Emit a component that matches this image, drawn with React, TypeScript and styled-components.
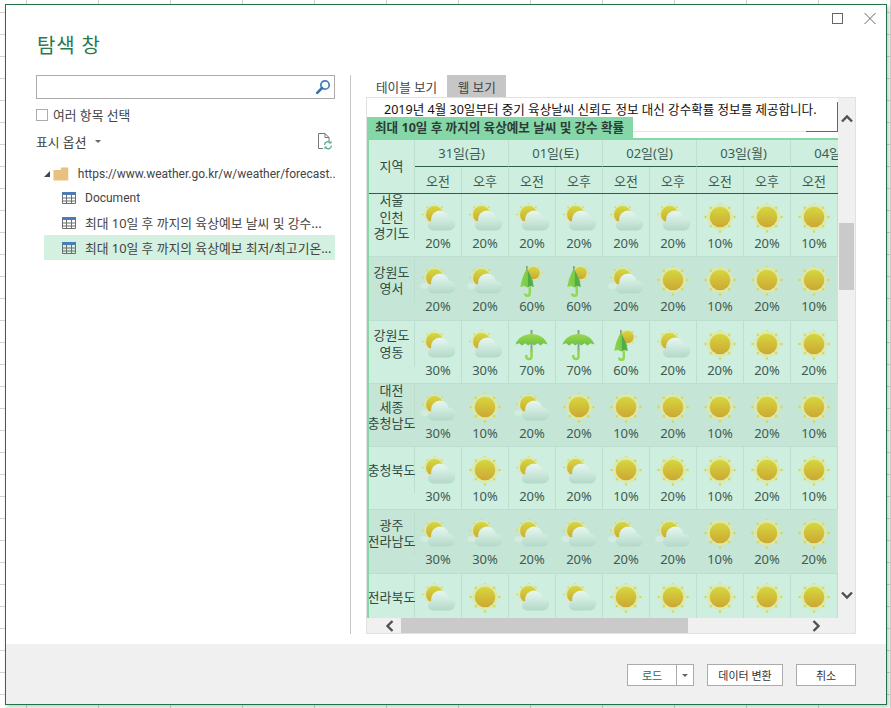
import React from 'react';
import styled, { createGlobalStyle } from 'styled-components';

const FONT = `"Noto Sans", "Noto Sans CJK KR", sans-serif`;
const LATIN = `Roboto, "Noto Sans CJK KR", sans-serif`;

const Global = createGlobalStyle`
  html, body { margin: 0; padding: 0; }
  body { font-family: ${FONT}; background: #fff; }
  * { box-sizing: border-box; }
`;

// 뒤쪽 엑셀 시트 격자
const Sheet = styled.div`
  width: 891px;
  height: 708px;
  padding: 4px 4px 3px 5px;
  overflow: hidden;
  background-color: #fff;
  background-image:
    linear-gradient(#d4d4d4 1px, transparent 1px),
    linear-gradient(90deg, #d4d4d4 1px, transparent 1px);
  background-size: 72px 22px;
  background-position: 26px 12px;
`;

const Dialog = styled.div`
  height: 701px;
  display: flex;
  flex-direction: column;
  background: #fff;
  border: 1px solid #217346;
  box-shadow: 2px 2px 4px rgba(0, 0, 0, 0.22);
`;

const TopBar = styled.div`
  height: 70px;
  display: flex;
  justify-content: space-between;
  padding: 8px 10px 0 31px;
`;

const Title = styled.h1`
  margin: 19px 0 0;
  font-size: 20px;
  line-height: 28px;
  font-weight: 400;
  letter-spacing: 0.8px;
  color: #2a7a50;
`;

const WinButtons = styled.div`
  display: flex;
  gap: 21px;
  align-items: flex-start;
`;

const Main = styled.div`
  flex: 1;
  display: flex;
  padding-left: 30px;
  min-height: 0;
`;

const LeftPane = styled.div`
  width: 299px;
  flex: none;
  display: flex;
  flex-direction: column;
`;

const Divider = styled.div`
  width: 1px;
  height: 559px;
  margin: 0 15px 0 15px;
  background: #c6c6c6;
`;

const RightPane = styled.div`
  width: 490px;
  flex: none;
`;

const SearchBox = styled.div`
  height: 24px;
  border: 1px solid #ababab;
  display: flex;
  align-items: center;
  justify-content: flex-end;
  padding-right: 3px;
`;

const CheckRow = styled.label`
  display: flex;
  align-items: center;
  gap: 5px;
  margin-top: 9px;
  font-size: 12.8px;
  line-height: 14px;
  color: #444;
`;

const CheckMark = styled.span`
  width: 12px;
  height: 12px;
  border: 1px solid #ababab;
  background: #fff;
`;

const OptionRow = styled.div`
  display: flex;
  align-items: center;
  justify-content: space-between;
  height: 18px;
  margin-top: 10px;
  padding-right: 2px;
  font-size: 12.8px;
  color: #444;
`;

const OptionLabel = styled.span`
  display: flex;
  align-items: center;
  gap: 9px;
`;

const Tree = styled.div`
  margin-top: 10px;
  color: #444;
`;

const TreeRow = styled.div<{ $selected?: boolean; $root?: boolean }>`
  height: 25px;
  margin-left: 8px;
  display: flex;
  align-items: center;
  padding-left: ${(p) => (p.$root ? '0' : '18px')};
  padding-top: ${(p) => (p.$root ? '2px' : '0')};
  background: ${(p) => (p.$selected ? '#d3f0e0' : 'transparent')};
  white-space: nowrap;
`;

const TreeText = styled.span<{ $latin?: boolean }>`
  margin-left: 9px;
  font-family: ${(p) => (p.$latin ? LATIN : FONT)};
  font-size: ${(p) => (p.$latin ? '12px' : '12.8px')};
  overflow: hidden;
`;

const Tabs = styled.div`
  height: 22px;
  display: flex;
  gap: 10px;
  padding-left: 10px;
  font-size: 12.6px;
`;

const Tab = styled.div<{ $active?: boolean }>`
  display: flex;
  align-items: center;
  color: #444;
  padding: 0 ${(p) => (p.$active ? '0' : '10.5px')};
  background: ${(p) => (p.$active ? 'transparent' : '#c6c6c6')};
`;

const WebPanel = styled.div`
  height: 537px;
  border: 1px solid #e1e1e1;
  display: grid;
  grid-template-columns: 471px 17px;
  grid-template-rows: 520px 15px;
  background: #f0f0f0;
`;

const Page = styled.div`
  background: #fff;
  overflow: hidden;
  display: flex;
  flex-direction: column;
`;

const Notice = styled.div`
  position: relative;
  height: 34px;
  padding: 3px 0 0 17px;
  font-size: 12.55px;
  line-height: 18px;
  color: #111;
  white-space: nowrap;
  border-bottom: 1px solid #dfe4f1;
  &::after {
    content: '';
    position: absolute;
    right: 0;
    top: 4px;
    bottom: -1px;
    width: 31px;
    border-right: 1px solid #1a73e8;
    border-bottom: 1px solid #1a73e8;
  }
`;

const Caption = styled.div`
  position: relative;
  width: 266px;
  height: 23px;
  margin-top: -15px;
  padding-left: 8px;
  background: #86d7a8;
  font-size: 12.6px;
  line-height: 21px;
  font-weight: 700;
  color: #2c3d35;
  white-space: nowrap;
`;

const TableWrap = styled.div`
  flex: 1;
  min-height: 0;
  overflow: hidden;
  border-left: 2px solid #86d7a8;
  border-top: 2px solid #86d7a8;
  margin-top: -2px;
  position: relative;
  background: #ceefdf;
`;

const HeadGrid = styled.div`
  position: relative;
  z-index: 1;
  display: grid;
  grid-template-columns: 46px repeat(10, 47px);
  grid-template-rows: 27px 26px;
  width: 516px;
  height: 54px;
  background: #ceefdf;
  color: #3f5a52;
  font-size: 13px;
  border-bottom: 1px solid #2f5d48;
`;

const RegionHead = styled.div`
  grid-row: span 2;
  display: flex;
  align-items: center;
  justify-content: center;
  border-right: 1px solid #bcdfcf;
  color: #2f4a40;
  padding-bottom: 3px;
`;

const DateHead = styled.div`
  grid-column: span 2;
  display: flex;
  align-items: center;
  justify-content: center;
  white-space: nowrap;
  padding-bottom: 1px;
  border-right: 1px solid #bcdfcf;
  border-bottom: 1px solid #2f5d48;
`;

const TimeHead = styled.div`
  display: flex;
  align-items: center;
  justify-content: center;
  border-right: 1px solid #bcdfcf;
`;

const BodyRow = styled.div<{ $dark: boolean }>`
  display: grid;
  grid-template-columns: 46px repeat(9, 47px);
  height: 63.3px;
  background: ${(p) => (p.$dark ? '#c5e6d6' : '#ceefdf')};
  border-bottom: 1px solid #bcdfcf;
`;

const RegionCell = styled.div`
  height: 46px;
  display: flex;
  flex-direction: column;
  align-items: center;
  justify-content: center;
  border-right: 1px solid #bcdfcf;
  font-size: 13px;
  line-height: 16.5px;
  color: #2f4a40;
  white-space: nowrap;
`;

const DataCell = styled.div<{ $dark: boolean }>`
  display: flex;
  flex-direction: column;
  align-items: center;
  padding-top: 9px;
  border-right: 1px solid ${(p) => (p.$dark ? 'transparent' : '#bcdfcf')};
  overflow: hidden;
`;

const Percent = styled.span`
  font-size: 13px;
  line-height: 16px;
  color: #3f5a52;
`;

const VScroll = styled.div`
  position: relative;
  display: flex;
  flex-direction: column;
  align-items: center;
  justify-content: space-between;
  padding: 15px 0 17px;
  background: #f0f0f0;
`;

const VThumb = styled.div`
  position: absolute;
  top: 125px;
  left: 1px;
  width: 15px;
  height: 67px;
  background: #cacaca;
`;

const HScroll = styled.div`
  position: relative;
  display: flex;
  align-items: center;
  justify-content: space-between;
  padding: 0 16px 0 17px;
  background: #f0f0f0;
`;

const HThumb = styled.div`
  position: absolute;
  left: 34px;
  top: 0;
  width: 287px;
  height: 15px;
  background: #cacaca;
`;

const Footer = styled.div`
  height: 60px;
  margin-top: 11px;
  flex: none;
  background: #f0f0f0;
  display: flex;
  justify-content: flex-end;
  gap: 13px;
  padding: 20px 30px 0 0;
`;

const Btn = styled.button<{ $w: number }>`
  width: ${(p) => p.$w}px;
  height: 22px;
  padding: 0;
  background: #fff;
  border: 1px solid #ababab;
  font-family: ${FONT};
  font-size: 11px;
  color: #333;
`;

const SplitBtn = styled.div`
  display: flex;
  width: 67px;
  height: 22px;
  background: #fff;
  border: 1px solid #ababab;
  font-size: 11px;
  color: #217346;
`;

const SplitMain = styled.div`
  flex: 1;
  display: flex;
  align-items: center;
  justify-content: center;
`;

const SplitArrow = styled.div`
  width: 17px;
  display: flex;
  align-items: center;
  justify-content: center;
  border-left: 1px solid #ababab;
`;

const Caret = styled.span`
  width: 0;
  height: 0;
  border-left: 3px solid transparent;
  border-right: 3px solid transparent;
  border-top: 3px solid #666;
`;

const TreeCaret = styled.span`
  width: 0;
  height: 0;
  margin-right: 3px;
  border-style: solid;
  border-width: 0 0 6px 6px;
  border-color: transparent transparent #444 transparent;
`;

const Search = () => (
  <svg width="16" height="16" viewBox="0 0 16 16">
    <circle cx="10" cy="6" r="4.2" fill="#fff" stroke="#3f7fbd" strokeWidth="1.7" />
    <path d="M7 9 L2.2 13.8" stroke="#3672ad" strokeWidth="2.6" strokeLinecap="round" />
  </svg>
);

const RefreshDoc = () => (
  <svg width="16" height="17" viewBox="0 0 16 17">
    <path d="M1.5 15.5V.5H8L12 4.5V8M8 .5V4.5H12M1.5 15.5H6" fill="none" stroke="#777" />
    <path d="M7.5 12a3.4 3.4 0 0 1 6-2M14.5 12.5a3.4 3.4 0 0 1-6 2" fill="none" stroke="#5fae8b" strokeWidth="1.3" />
    <path d="M14.5 7.5v3h-3zM7.5 16.5v-3h3z" fill="#5fae8b" />
  </svg>
);

const Folder = () => (
  <svg width="16" height="14" viewBox="0 0 16 14">
    <path d="M0.5 3H8V0.5H15.5V13.5H0.5Z" fill="#e8c17f" />
  </svg>
);

const TableIcon = () => (
  <svg width="14" height="12" viewBox="0 0 14 12">
    <rect x="0" y="0" width="14" height="3" fill="#4a7db8" />
    <path d="M.5 3v8.5h13V3M.5 6h13M.5 9h13M4.5 3v8.5M9.5 3v8.5" fill="none" stroke="#6f6f6f" />
  </svg>
);

const Rays = ({ cx, cy, r, d }: { cx: number; cy: number; r: number; d: number }) => (
  <g fill="#d9d84a">
    {[0, 45, 90, 135, 180, 225, 270, 315].map((a) => {
      const rad = (a * Math.PI) / 180;
      const dist = a % 90 === 0 ? r : r * 0.9;
      return (
        <rect
          key={a}
          x={cx + Math.cos(rad) * dist - d / 2}
          y={cy + Math.sin(rad) * dist - d / 2}
          width={d}
          height={d}
        />
      );
    })}
  </g>
);

const Defs = () => (
  <svg width="0" height="0" style={{ position: 'absolute' }}>
    <defs>
      <linearGradient id="sunFill" x1="0" y1="0" x2="0" y2="1">
        <stop offset="0" stopColor="#d6d73e" />
        <stop offset="1" stopColor="#cda733" />
      </linearGradient>
      <linearGradient id="cloudFill" gradientUnits="userSpaceOnUse" x1="0" y1="9" x2="0" y2="29">
        <stop offset="0" stopColor="#e6f7f0" />
        <stop offset="1" stopColor="#b2d8c7" />
      </linearGradient>
      <linearGradient id="umbFill" x1="0" y1="0" x2="0" y2="1">
        <stop offset="0" stopColor="#9ad94f" />
        <stop offset="1" stopColor="#6cc043" />
      </linearGradient>
      <linearGradient id="umbSide" x1="0" y1="0" x2="1" y2="0">
        <stop offset="0" stopColor="#8fd54c" />
        <stop offset="0.55" stopColor="#79c948" />
        <stop offset="0.6" stopColor="#4fab45" />
        <stop offset="1" stopColor="#58b247" />
      </linearGradient>
    </defs>
  </svg>
);

type Kind = 'sun' | 'cloud' | 'rain' | 'umbrella';

const Weather = ({ kind }: { kind: Kind }) => {
  if (kind === 'sun') {
    return (
      <svg width="40" height="32" viewBox="0 1 40 32">
        <circle cx="20" cy="15" r="13" fill="#dfe8a0" opacity="0.8" />
        <circle cx="20" cy="15" r="10.3" fill="url(#sunFill)" />
        <Rays cx={20} cy={15} r={14.5} d={2.2} />
      </svg>
    );
  }
  if (kind === 'cloud') {
    return (
      <svg width="40" height="32" viewBox="0 1 40 32">
        <circle cx="16.5" cy="12.5" r="10.3" fill="#dfe8a0" opacity="0.7" />
        <circle cx="16.5" cy="12.5" r="8.5" fill="url(#sunFill)" />
        <Rays cx={16.5} cy={12.5} r={11.5} d={1.5} />
        <ellipse cx="6.5" cy="21" rx="4.2" ry="3" fill="#d3ecdf" />
        <g fill="url(#cloudFill)">
          <circle cx="22" cy="17.5" r="9" />
          <circle cx="31" cy="22" r="6.3" />
          <circle cx="15" cy="23.5" r="5" />
          <rect x="13" y="21" width="20" height="7.5" rx="3" />
        </g>
      </svg>
    );
  }
  if (kind === 'rain') {
    return (
      <svg width="40" height="32" viewBox="0 1 40 32">
        <circle cx="21.5" cy="8" r="7.5" fill="#dfe8a0" opacity="0.7" />
        <circle cx="21.5" cy="8" r="6.2" fill="url(#sunFill)" />
        <Rays cx={21.5} cy={8} r={8.5} d={1.3} />
        <path d="M14.8 0.5V5" stroke="#8a9a92" strokeWidth="1.6" />
        <path d="M14.8 3 L20.5 15 L21.8 22 L18.5 21 L15.5 22.5 L12 21 L8.2 22 L10 14 Z" fill="url(#umbSide)" />
        <path d="M17.8 21.5V28.5a2.3 2.3 0 0 1-4.6 0" fill="none" stroke="#91d84f" strokeWidth="2.4" />
      </svg>
    );
  }
  return (
    <svg width="40" height="32" viewBox="0 1 40 32">
      <path d="M19.5 1V23" stroke="#8a9f96" strokeWidth="2" />
      <path
        d="M3.5 15.5C6 8.5 12.5 5 19.5 5s13.5 3.5 16 10.5l-4-1.2-3 2.2-3-2.2-3.2 2.2-3-2.2-3 2.2-3-2.2-3.2 2.2-3-2.2z"
        fill="url(#umbFill)"
      />
      <path d="M19.5 21V27.5a2.6 2.6 0 0 1-5.2 0V26" fill="none" stroke="#91d84f" strokeWidth="2.5" />
    </svg>
  );
};

const dates = ['31일(금)', '01일(토)', '02일(일)', '03일(월)', '04일(화)'];

const C: Kind = 'cloud';
const S: Kind = 'sun';
const R: Kind = 'rain';
const U: Kind = 'umbrella';

const rows: { region: string[]; icons: Kind[]; pct: number[] }[] = [
  { region: ['서울', '인천', '경기도'], icons: [C, C, C, C, C, C, S, S, S], pct: [20, 20, 20, 20, 20, 20, 10, 20, 10] },
  { region: ['강원도', '영서'], icons: [C, C, R, R, C, S, S, S, S], pct: [20, 20, 60, 60, 20, 20, 10, 20, 10] },
  { region: ['강원도', '영동'], icons: [C, C, U, U, R, C, S, S, S], pct: [30, 30, 70, 70, 60, 20, 20, 20, 20] },
  { region: ['대전', '세종', '충청남도'], icons: [C, S, C, S, S, S, S, S, S], pct: [30, 10, 20, 20, 10, 20, 10, 20, 10] },
  { region: ['충청북도'], icons: [C, S, C, C, S, S, S, S, S], pct: [30, 10, 20, 20, 10, 20, 10, 20, 10] },
  { region: ['광주', '전라남도'], icons: [C, C, C, C, C, C, S, S, S], pct: [30, 30, 20, 20, 20, 20, 10, 20, 20] },
  { region: ['전라북도'], icons: [C, S, C, C, S, S, S, S, S], pct: [30, 10, 20, 20, 10, 20, 10, 20, 10] },
];

const Chevron = ({ dir }: { dir: 'up' | 'down' | 'left' | 'right' }) => {
  const rot = { up: 0, right: 90, down: 180, left: 270 }[dir];
  return (
    <svg width="12" height="12" viewBox="0 0 12 12" style={{ transform: `rotate(${rot}deg)`, position: 'relative', zIndex: 1 }}>
      <path d="M1 8.5 L6 3.5 L11 8.5" fill="none" stroke="#505050" strokeWidth="2.4" />
    </svg>
  );
};

const WeatherTable = () => (
  <TableWrap>
    <HeadGrid>
      <RegionHead>지역</RegionHead>
      {dates.map((d) => (
        <DateHead key={d}>{d}</DateHead>
      ))}
      {Array.from({ length: 10 }).map((_, i) => (
        <TimeHead key={i}>{i % 2 === 0 ? '오전' : '오후'}</TimeHead>
      ))}
    </HeadGrid>
    {rows.map((row, r) => (
      <BodyRow key={r} $dark={r % 2 === 1}>
        <RegionCell>
          {row.region.map((t) => (
            <span key={t}>{t}</span>
          ))}
        </RegionCell>
        {row.icons.map((k, i) => (
          <DataCell key={i} $dark={r % 2 === 1}>
            <Weather kind={k} />
            <Percent>{row.pct[i]}%</Percent>
          </DataCell>
        ))}
      </BodyRow>
    ))}
  </TableWrap>
);

export default function App() {
  return (
    <Sheet>
      <Global />
      <Defs />
      <Dialog>
        <TopBar>
          <Title>탐색 창</Title>
          <WinButtons>
            <svg width="11" height="11" viewBox="0 0 11 11">
              <rect x="0.5" y="0.5" width="10" height="10" fill="none" stroke="#666" />
            </svg>
            <svg width="12" height="11" viewBox="0 0 12 11">
              <path d="M.5 0 L11.5 11 M11.5 0 L.5 11" stroke="#666" fill="none" />
            </svg>
          </WinButtons>
        </TopBar>
        <Main>
          <LeftPane>
            <SearchBox>
              <Search />
            </SearchBox>
            <CheckRow>
              <CheckMark />
              여러 항목 선택
            </CheckRow>
            <OptionRow>
              <OptionLabel>
                표시 옵션
                <Caret />
              </OptionLabel>
              <RefreshDoc />
            </OptionRow>
            <Tree>
              <TreeRow $root>
                <TreeCaret />
                <Folder />
                <TreeText $latin>https://www.weather.go.kr/w/weather/forecast...</TreeText>
              </TreeRow>
              <TreeRow>
                <TableIcon />
                <TreeText $latin>Document</TreeText>
              </TreeRow>
              <TreeRow>
                <TableIcon />
                <TreeText>최대 10일 후 까지의 육상예보 날씨 및 강수...</TreeText>
              </TreeRow>
              <TreeRow $selected>
                <TableIcon />
                <TreeText>최대 10일 후 까지의 육상예보 최저/최고기온...</TreeText>
              </TreeRow>
            </Tree>
          </LeftPane>
          <Divider />
          <RightPane>
            <Tabs>
              <Tab $active>테이블 보기</Tab>
              <Tab>웹 보기</Tab>
            </Tabs>
            <WebPanel>
              <Page>
                <Notice>2019년 4월 30일부터 중기 육상날씨 신뢰도 정보 대신 강수확률 정보를 제공합니다.</Notice>
                <Caption>최대 10일 후 까지의 육상예보 날씨 및 강수 확률</Caption>
                <WeatherTable />
              </Page>
              <VScroll>
                <Chevron dir="up" />
                <VThumb />
                <Chevron dir="down" />
              </VScroll>
              <HScroll>
                <Chevron dir="left" />
                <HThumb />
                <Chevron dir="right" />
              </HScroll>
              <div />
            </WebPanel>
          </RightPane>
        </Main>
        <Footer>
          <SplitBtn>
            <SplitMain>로드</SplitMain>
            <SplitArrow>
              <Caret />
            </SplitArrow>
          </SplitBtn>
          <Btn $w={76}>데이터 변환</Btn>
          <Btn $w={60}>취소</Btn>
        </Footer>
      </Dialog>
    </Sheet>
  );
}
